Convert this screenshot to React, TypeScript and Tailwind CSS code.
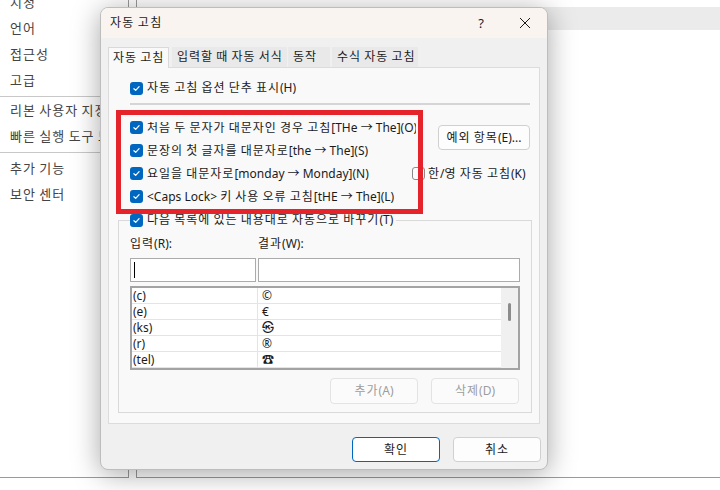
import React from "react";

const HANGUL = /([\uAC00-\uD7A3\u3131-\u318E]+)/;

function K({ s, h = "tracking-[1px]" }: { s: string; h?: string }) {
  const parts = s.split(HANGUL);
  return (
    <span className="whitespace-pre">
      {parts.map((p, i) =>
        i % 2 === 1 ? (
          <span key={i} className={h}>
            {p}
          </span>
        ) : (
          <React.Fragment key={i}>{p}</React.Fragment>
        )
      )}
    </span>
  );
}

function Cb({ checked = true }: { checked?: boolean }) {
  return checked ? (
    <span className="flex h-[13px] w-[13px] shrink-0 items-center justify-center rounded-[3px] bg-[#0067c0]">
      <svg width="9" height="9" viewBox="0 0 9 9">
        <path
          d="M1.9 4.7 L3.7 6.4 L7.1 2.7"
          fill="none"
          stroke="white"
          strokeWidth="1.2"
          strokeLinecap="round"
          strokeLinejoin="round"
        />
      </svg>
    </span>
  ) : (
    <span className="h-[13px] w-[13px] shrink-0 rounded-[3px] border border-[#8a8a8a] bg-[#fdfdfd]" />
  );
}

function SideItem({ s, className = "" }: { s: string; className?: string }) {
  return (
    <div className={"flex h-[26px] shrink-0 items-center overflow-hidden whitespace-nowrap pl-[10px] " + className}>
      <K s={s} h="tracking-[1px]" />
    </div>
  );
}

const rows: [string, string][] = [
  ["(c)", "©"],
  ["(e)", "€"],
  ["(ks)", "㉿"],
  ["(r)", "®"],
  ["(tel)", "☎"],
];

export default function App() {
  return (
    <div className="relative h-[490px] w-[720px] overflow-hidden bg-white font-['Noto_Sans','Noto_Sans_CJK_KR',sans-serif] text-[12px] leading-none text-[#1b1b1b]">
      {/* background window */}
      <div className="flex h-[478px]">
        <div className="flex w-[129px] shrink-0 flex-col border-r border-b border-[#9a9a9a] text-[13px] text-[#444]">
          <SideItem s="지정" className="mt-[-11px]" />
          <SideItem s="언어" />
          <SideItem s="접근성" />
          <SideItem s="고급" />
          <div className="mt-[3px] h-[1px] shrink-0 bg-[#c8c8c8]" />
          <SideItem s="리본 사용자 지정" />
          <SideItem s="빠른 실행 도구 모음" />
          <div className="mt-[3px] h-[1px] shrink-0 bg-[#c8c8c8]" />
          <SideItem s="추가 기능" className="mt-[2px]" />
          <SideItem s="보안 센터" />
        </div>
        <div className="w-[7px] shrink-0" />
        <div className="flex-1 border-l border-b border-[#9a9a9a]">
          <div className="mt-[7px] h-[23px] bg-[#ebebeb]" />
        </div>
      </div>

      {/* dialog */}
      <div className="absolute left-[100px] top-[7px] flex h-[463px] w-[448px] flex-col overflow-hidden rounded-[8px] border border-[#bdbdbd] bg-[#f0f0f0] shadow-[0_4px_28px_rgba(0,0,0,0.35)]">
        {/* title bar */}
        <div className="flex h-[30px] shrink-0 items-center bg-[#faf4f1] pl-[9px]">
          <span className="flex-1">
            <K s="자동 고침" h="tracking-[1.3px]" />
          </span>
          <span className="flex w-[44px] justify-center text-[13px]">?</span>
          <span className="flex w-[44px] justify-center">
            <svg width="12" height="12" viewBox="0 0 12 12">
              <path d="M1 1 L11 11 M11 1 L1 11" stroke="#1b1b1b" strokeWidth="1" fill="none" />
            </svg>
          </span>
        </div>

        {/* tabs */}
        <div className="mt-[9px] flex h-[20px] shrink-0 pl-[7px]">
          <div className="relative z-10 flex h-[21px] w-[61px] items-center border-x border-t border-[#d9d9d9] bg-[#f9f9f9] pl-[4px] whitespace-nowrap">
            <K s="자동 고침" />
          </div>
          <div className="ml-[3px] flex w-[115px] items-center bg-[#e9e9e9] pl-[5px] whitespace-nowrap">
            <K s="입력할 때 자동 서식" />
          </div>
          <div className="ml-[1px] flex w-[42px] items-center bg-[#e9e9e9] pl-[5px] whitespace-nowrap">
            <K s="동작" />
          </div>
          <div className="ml-[2px] flex w-[86px] items-center bg-[#e9e9e9] pl-[5px] whitespace-nowrap">
            <K s="수식 자동 고침" />
          </div>
        </div>

        {/* panel */}
        <div className="relative ml-[7px] flex h-[357px] w-[432px] shrink-0 flex-col border border-[#dcdcdc] bg-[#f9f9f9]">
          <div className="mt-[11px] flex h-[18px] items-center gap-[4px] pl-[21px] whitespace-nowrap">
            <Cb />
            <K s="자동 고침 옵션 단추 표시(H)" />
          </div>
          <div className="ml-[21px] mr-[9px] mt-[6px] h-[2px] bg-[#d5d5d5]" />

          <div className="mt-[11px] grid grid-cols-[282px_1fr] grid-rows-[23px_23px_23px_23px] pl-[21px]">
            <div className="flex items-center gap-[4px] whitespace-nowrap">
              <Cb />
              <span className="w-[269px] shrink-0 overflow-hidden">
                <K s="처음 두 문자가 대문자인 경우 고침[THe → The](O)" />
              </span>
            </div>
            <div className="row-span-2 flex items-start pl-[26px] pt-[9px]">
              <div className="flex h-[25px] w-[92px] items-center justify-center rounded-[4px] border border-[#d0d0d0] bg-[#fdfdfd] whitespace-nowrap">
                <K s="예외 항목(E)..." />
              </div>
            </div>
            <div className="flex items-center gap-[4px] whitespace-nowrap">
              <Cb />
              <K s="문장의 첫 글자를 대문자로[the → The](S)" />
            </div>
            <div className="flex items-center gap-[4px] whitespace-nowrap">
              <Cb />
              <K s="요일을 대문자로[monday → Monday](N)" />
            </div>
            <div className="flex items-center gap-[3px] whitespace-nowrap">
              <Cb checked={false} />
              <K s="한/영 자동 고침(K)" />
            </div>
            <div className="flex items-center gap-[4px] whitespace-nowrap">
              <Cb />
              <K s="<Caps Lock> 키 사용 오류 고침[tHE → The](L)" />
            </div>
          </div>

          <fieldset className="ml-[9px] mt-[3px] w-[414px] border border-[#d9d9d9] px-[11px] pb-[8px]">
            <legend className="px-0">
              <div className="flex h-[18px] items-center gap-[4px] whitespace-nowrap pr-[3px]">
                <Cb />
                <K s="다음 목록에 있는 내용대로 자동으로 바꾸기(T)" />
              </div>
            </legend>
            <div className="mt-[6px] grid h-[18px] grid-cols-[128px_262px] items-center">
              <K s="입력(R):" />
              <K s="결과(W):" />
            </div>
            <div className="mt-[5px] flex h-[24px] gap-[2px]">
              <div className="flex w-[126px] items-center border border-[#ababab] bg-white pl-[3px]">
                <div className="h-[16px] w-[1px] bg-black" />
              </div>
              <div className="w-[262px] border border-[#ababab] bg-white" />
            </div>
            <div className="mt-[4px] flex h-[84px] w-[390px] border-2 border-[#a3a3a3] bg-white">
              <div className="flex flex-1 flex-col">
                {rows.map(([a, b]) => (
                  <div key={a} className="flex h-[16px] shrink-0 border-b border-[#e4e4e4]">
                    <div className="flex w-[126px] items-center border-r border-[#e4e4e4] pl-[1px]">{a}</div>
                    <div className="flex flex-1 items-center pl-[4px]">{b}</div>
                  </div>
                ))}
              </div>
              <div className="relative w-[17px] bg-[#f0f0f0]">
                <div className="absolute left-[7px] top-[15px] h-[18px] w-[3px] rounded-full bg-[#8b8b8b]" />
              </div>
            </div>
            <div className="mt-[8px] flex justify-end gap-[13px] pr-[1px] text-[#9d9d9d]">
              <div className="flex h-[26px] w-[88px] items-center justify-center rounded-[4px] border border-[#e3e3e3] bg-[#fbfbfb]">
                <K s="추가(A)" />
              </div>
              <div className="flex h-[26px] w-[88px] items-center justify-center rounded-[4px] border border-[#e3e3e3] bg-[#fbfbfb]">
                <K s="삭제(D)" />
              </div>
            </div>
          </fieldset>

          <div className="absolute left-[7px] top-[42px] h-[104px] w-[307px] border-[5px] border-[#e5232b]" />
        </div>

        {/* bottom buttons */}
        <div className="mt-[13px] flex shrink-0 justify-end gap-[13px] pr-[6px]">
          <div className="flex h-[25px] w-[88px] items-center justify-center rounded-[4px] border border-[#0067c0] bg-white">
            <K s="확인" />
          </div>
          <div className="flex h-[25px] w-[88px] items-center justify-center rounded-[4px] border border-[#d0d0d0] bg-[#fdfdfd]">
            <K s="취소" />
          </div>
        </div>
      </div>
    </div>
  );
}
